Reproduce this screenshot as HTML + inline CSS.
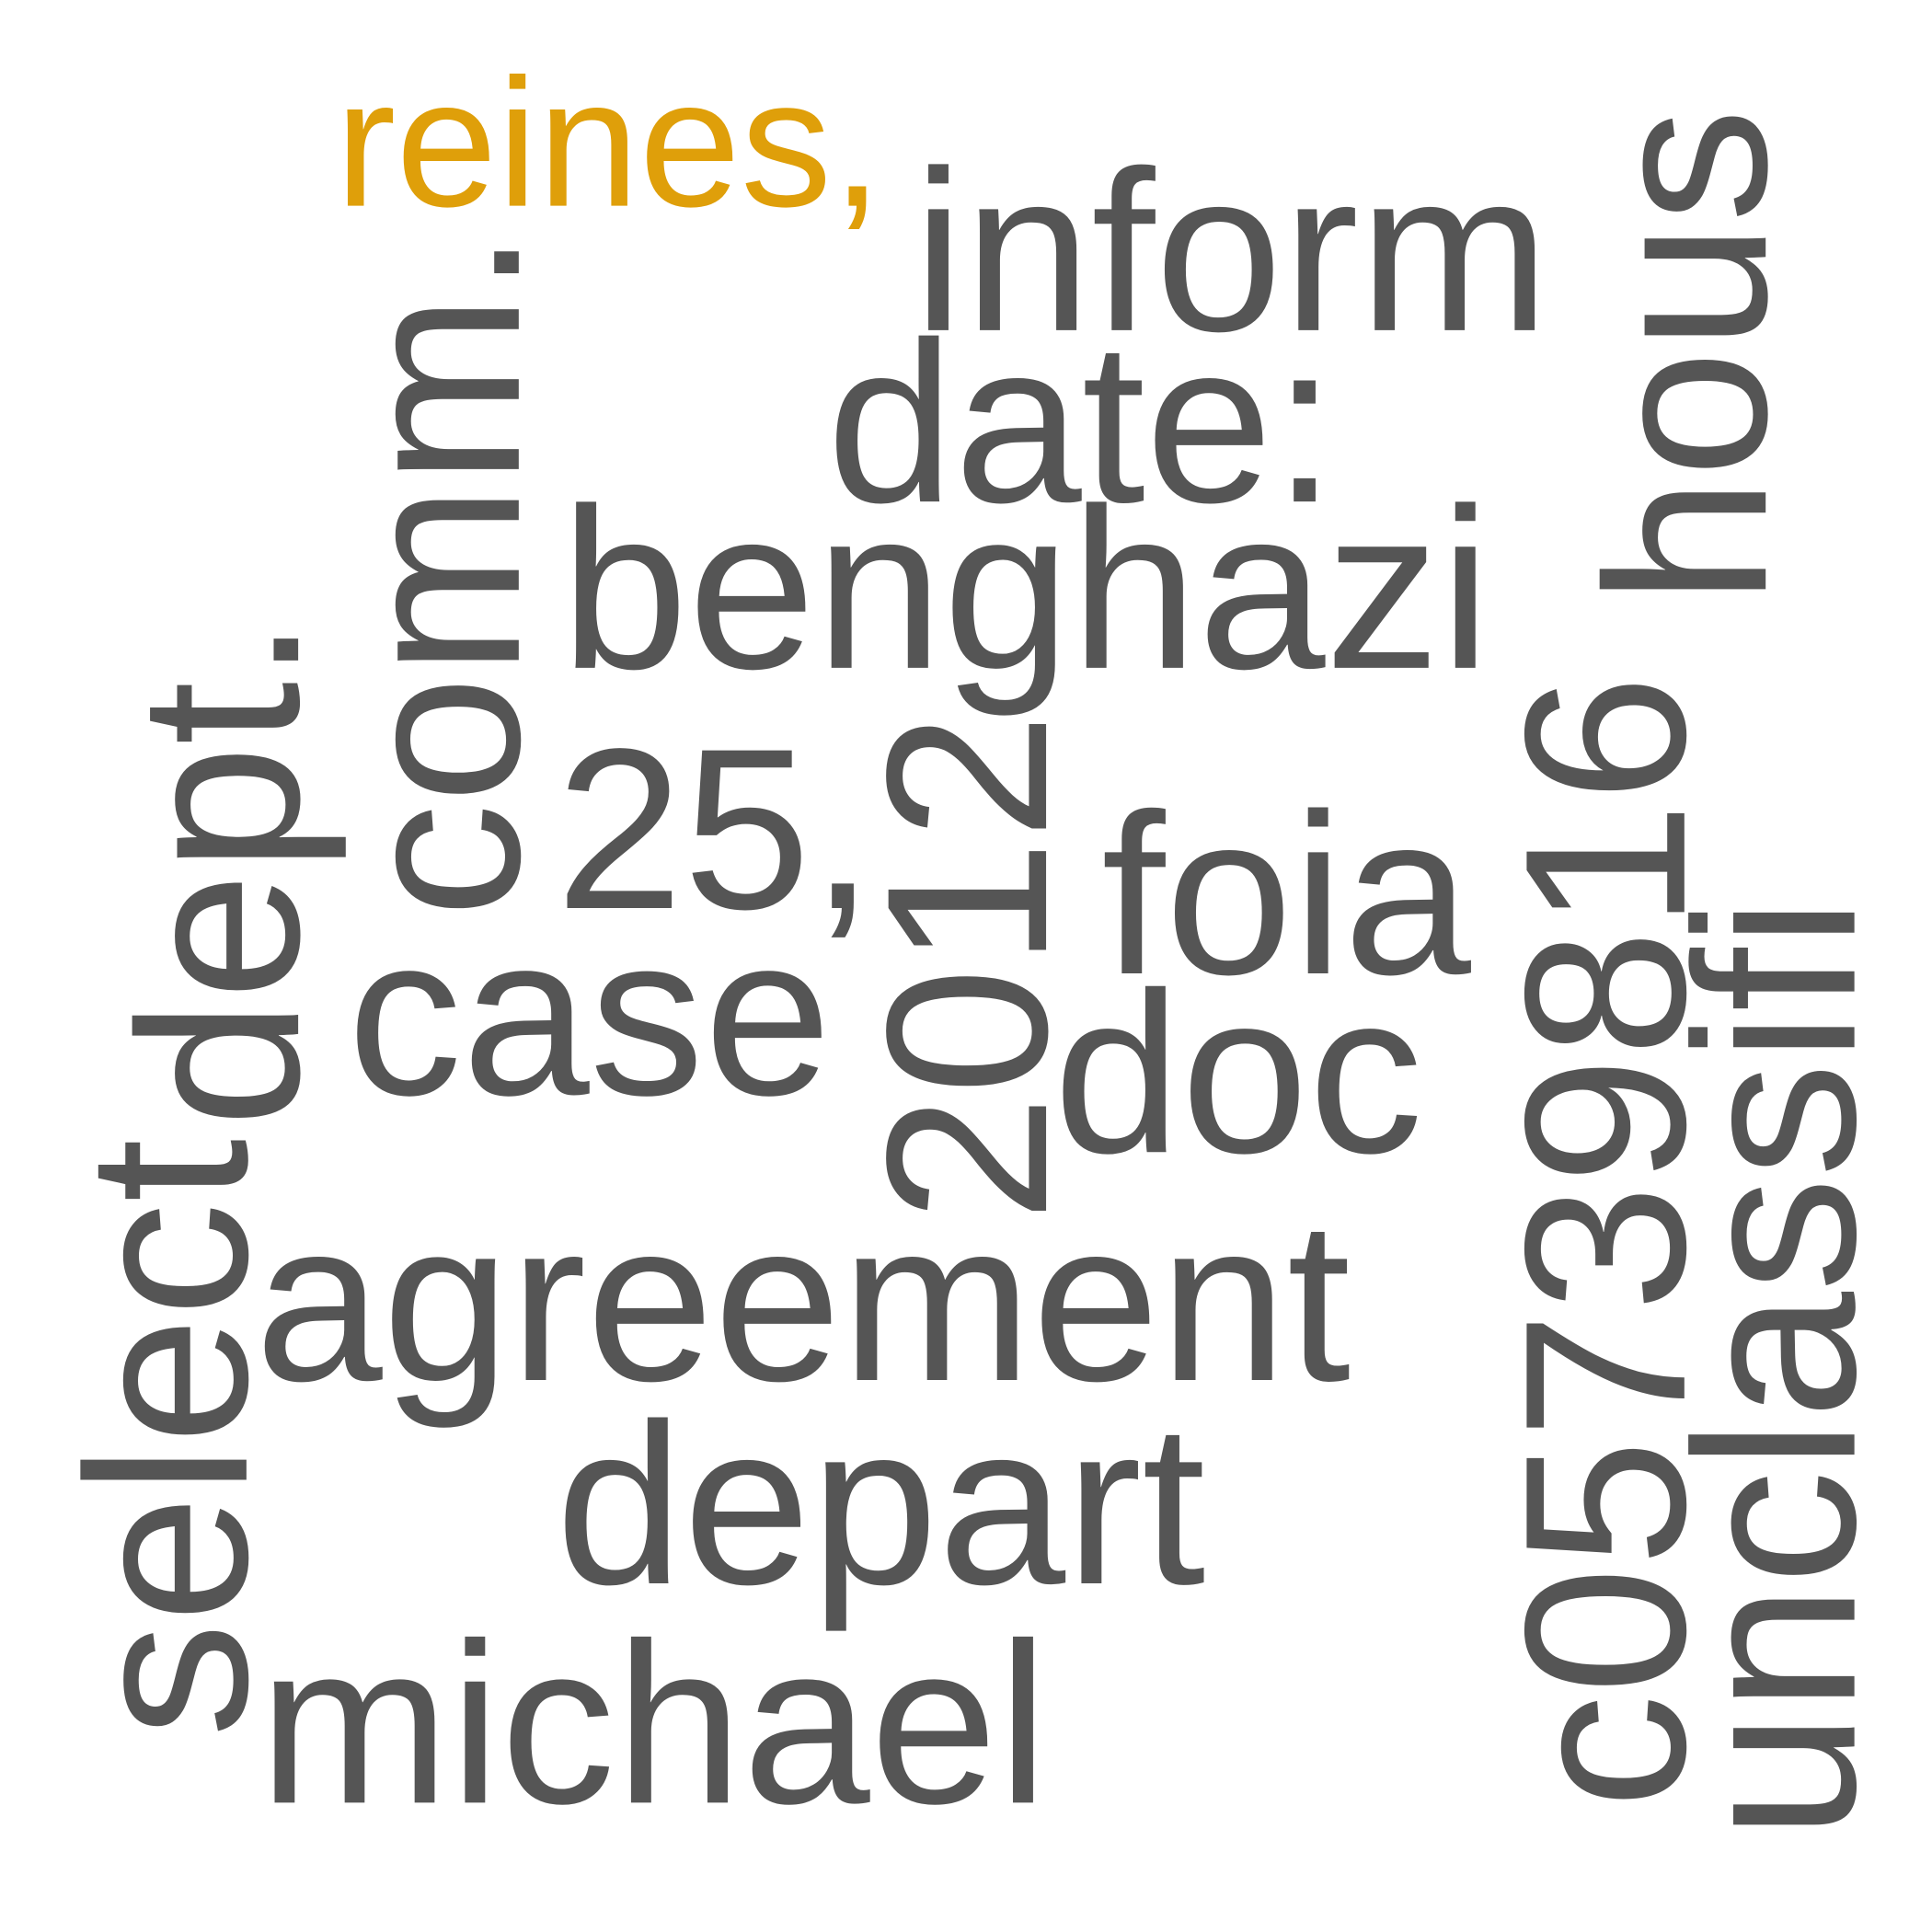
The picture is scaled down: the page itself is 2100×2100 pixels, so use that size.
<!DOCTYPE html>
<html><head><meta charset="utf-8"><style>
html,body{margin:0;padding:0;background:#fff;}
svg{display:block}
text{font-family:"Liberation Sans",Arial,sans-serif;font-size:186px;fill:#555555;}
</style></head><body>
<svg width="2100" height="2100" viewBox="0 0 1568 1568" xmlns="http://www.w3.org/2000/svg">
<rect width="1568" height="1568" fill="#fff"/>
<text x="272" y="167" style="font-size:148px;fill:#DF9F0A">reines,</text>
<text x="741" y="268">inform</text>
<text x="671" y="407">date:</text>
<text x="455" y="542">benghazi</text>
<text x="451" y="737">25,</text>
<text x="894" y="790">foia</text>
<text x="282" y="888">case</text>
<text x="855" y="935">doc</text>
<text x="207" y="1120">agreement</text>
<text x="451" y="1285">depart</text>
<text x="210" y="1463">michael</text>
<text transform="translate(421,745) rotate(-90)">comm.</text>
<text transform="translate(200,1410) rotate(-90)">select</text>
<text transform="translate(242,915) rotate(-90)">dept.</text>
<text transform="translate(849,992) rotate(-90)">2012</text>
<text transform="translate(1433,491) rotate(-90)">hous</text>
<text transform="translate(1367,1468) rotate(-90)">c05739816</text>
<text transform="translate(1505,1493) rotate(-90)">unclassifi</text>
</svg>
</body></html>
